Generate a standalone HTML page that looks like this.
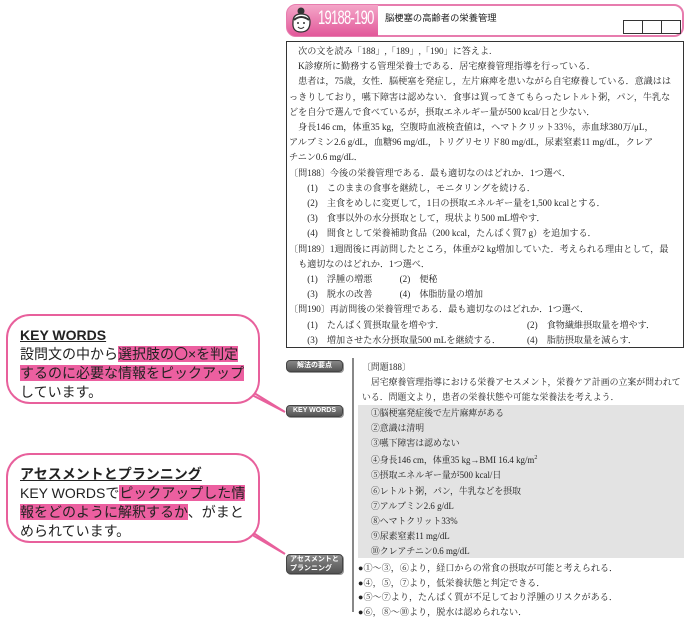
<!DOCTYPE html>
<html><head><meta charset="utf-8"><style>
*{margin:0;padding:0;box-sizing:border-box}
body{width:689px;height:612px;background:#fff;position:relative;overflow:hidden;font-family:"Liberation Serif","Noto Serif CJK SC",serif;color:#222}
.a{position:absolute;white-space:nowrap}
.q{font-size:9.1px;line-height:15.2px}
.s{font-family:"Liberation Sans","Noto Sans CJK JP",sans-serif}
.lab{position:absolute;left:286px;width:57px;background:linear-gradient(#888,#555);border:1px solid #444;border-radius:4px;color:#fff;font-family:"Liberation Sans","Noto Sans CJK JP",sans-serif;font-size:7px;font-weight:bold;text-align:center;line-height:9px;box-shadow:1px 1px 0 #999;white-space:nowrap;overflow:hidden}
.call{position:absolute;left:6px;width:254px;height:90px;border:2px solid #e8609c;border-radius:24px;background:#fff;font-family:"Liberation Sans","Noto Sans CJK JP",sans-serif;font-size:14px;line-height:19px;padding:10px 0 0 12px;color:#222;white-space:nowrap}
.call b{text-decoration:underline;font-weight:bold}
.hl{background:#ec5fa0}
</style></head><body>
<!-- header -->
<div class="a" style="left:286px;top:4px;width:398px;height:33px;border:2px solid #e77cae;border-radius:10px;background:#fff"></div>
<div class="a" style="left:287px;top:5px;width:91px;height:31px;background:linear-gradient(#f4a6c8,#e2589a);border-radius:9px 0 0 9px"></div>
<svg class="a" style="left:289px;top:5px" width="26" height="30" viewBox="0 0 26 30"><circle cx="12" cy="6" r="3.5" fill="#333"/><path d="M4 17 Q4 9 12 9 Q21 9 21 17 Q21 27 12 27 Q3 27 4 17Z" fill="#fff" stroke="#333" stroke-width="1.3"/><path d="M5 15 Q12 9 20 15" fill="none" stroke="#333" stroke-width="2"/><circle cx="9" cy="18" r="1" fill="#333"/><circle cx="15" cy="18" r="1" fill="#333"/><path d="M9 22 Q12 25 15 22" fill="none" stroke="#333"/></svg>
<div class="a s" style="left:318px;top:8px;font-size:19px;color:#fff;letter-spacing:-1px;transform:scaleX(.68);transform-origin:left">19188-190</div>
<div class="a s" style="left:385px;top:10px;font-size:9.3px">脳梗塞の高齢者の栄養管理</div>
<div class="a" style="left:623px;top:20px;width:20px;height:14px;border:1px solid #333"></div>
<div class="a" style="left:642px;top:20px;width:20px;height:14px;border:1px solid #333"></div>
<div class="a" style="left:661px;top:20px;width:20px;height:14px;border:1px solid #333"></div>
<!-- question box -->
<div class="a" style="left:286px;top:41px;width:398px;height:307px;border:1px solid #333"></div>
<div class="a q" style="left:289px;top:44px">
<div>　次の文を読み「188」,「189」,「190」に答えよ.</div>
<div>　K診療所に勤務する管理栄養士である．居宅療養管理指導を行っている．</div>
<div>　患者は，75歳，女性．脳梗塞を発症し，左片麻痺を患いながら自宅療養している．意識はは</div>
<div>っきりしており，嚥下障害は認めない．食事は買ってきてもらったレトルト粥，パン，牛乳な</div>
<div>どを自分で選んで食べているが，摂取エネルギー量が500 kcal/日と少ない．</div>
<div>　身長146 cm，体重35 kg，空腹時血液検査値は，ヘマトクリット33％，赤血球380万/μL，</div>
<div>アルブミン2.6 g/dL，血糖96 mg/dL，トリグリセリド80 mg/dL，尿素窒素11 mg/dL，クレア</div>
<div>チニン0.6 mg/dL．</div>
<div>〔問188〕今後の栄養管理である．最も適切なのはどれか．1つ選べ．</div>
<div>　　(1)　このままの食事を継続し，モニタリングを続ける．</div>
<div>　　(2)　主食をめしに変更して，1日の摂取エネルギー量を1,500 kcalとする．</div>
<div>　　(3)　食事以外の水分摂取として，現状より500 mL増やす．</div>
<div>　　(4)　間食として栄養補助食品（200 kcal，たんぱく質7 g）を追加する．</div>
<div>〔問189〕1週間後に再訪問したところ，体重が2 kg増加していた．考えられる理由として，最</div>
<div>　も適切なのはどれか．1つ選べ．</div>
<div>　　(1)　浮腫の増悪　　　(2)　便秘</div>
<div>　　(3)　脱水の改善　　　(4)　体脂肪量の増加</div>
<div>〔問190〕再訪問後の栄養管理である．最も適切なのはどれか．1つ選べ．</div>
<div>　　(1)　たんぱく質摂取量を増やす．<span class="a" style="left:238px">(2)　食物繊維摂取量を増やす．</span></div>
<div>　　(3)　増加させた水分摂取量500 mLを継続する．<span class="a" style="left:238px">(4)　脂肪摂取量を減らす．</span></div>
</div>
<!-- labels -->
<div class="lab" style="top:360px;height:12px">解法の要点</div>
<div class="lab" style="top:405px;height:12px">KEY WORDS</div>
<div class="lab" style="top:554px;height:20px;text-align:left;padding-left:3px">アセスメントと<br>プランニング</div>
<div class="a" style="left:352px;top:358px;width:2px;height:254px;background:#888"></div>
<!-- answer -->
<div class="a" style="left:358px;top:405px;width:326px;height:153px;background:#e3e3e3"></div>
<div class="a q" style="left:362px;top:360px;font-size:8.9px">
<div>〔問題188〕</div>
<div>　居宅療養管理指導における栄養アセスメント，栄養ケア計画の立案が問われて</div>
<div>いる．問題文より，患者の栄養状態や可能な栄養法を考えよう．</div>
<div>　①脳梗塞発症後で左片麻痺がある</div>
<div>　②意識は清明</div>
<div>　③嚥下障害は認めない</div>
<div>　④身長146 cm，体重35 kg→BMI 16.4 kg/m<sup style="font-size:6px">2</sup></div>
<div>　⑤摂取エネルギー量が500 kcal/日</div>
<div>　⑥レトルト粥，パン，牛乳などを摂取</div>
<div>　⑦アルブミン2.6 g/dL</div>
<div>　⑧ヘマトクリット33%</div>
<div>　⑨尿素窒素11 mg/dL</div>
<div>　⑩クレアチニン0.6 mg/dL</div>
</div>
<div class="a q" style="left:358px;top:561px;line-height:14.7px">
<div>●①～③，⑥より，経口からの常食の摂取が可能と考えられる．</div>
<div>●④，⑤，⑦より，低栄養状態と判定できる．</div>
<div>●⑤～⑦より，たんぱく質が不足しており浮腫のリスクがある．</div>
<div>●⑥，⑧～⑩より，脱水は認められない．</div>
</div>
<!-- callouts -->
<svg class="a" style="left:0;top:0" width="689" height="612"><path d="M246 388 L285 412 L254 396Z" fill="#fff" stroke="#e8609c" stroke-width="2"/><path d="M246 528 L285 554 L254 536Z" fill="#fff" stroke="#e8609c" stroke-width="2"/></svg>
<div class="call" style="top:314px"><b>KEY WORDS</b><br>設問文の中から<span class="hl">選択肢の〇×を判定</span><br><span class="hl">するのに必要な情報をピックアップ</span><br>しています。</div>
<div class="call" style="top:453px"><b>アセスメントとプランニング</b><br>KEY WORDSで<span class="hl">ピックアップした情</span><br><span class="hl">報をどのように解釈するか</span>、がまと<br>められています。</div>
<svg class="a" style="left:0;top:0" width="689" height="612"><path d="M247 389 L254 389" stroke="#fff" stroke-width="3"/><path d="M247 529 L254 529" stroke="#fff" stroke-width="3"/></svg>
</body></html>
